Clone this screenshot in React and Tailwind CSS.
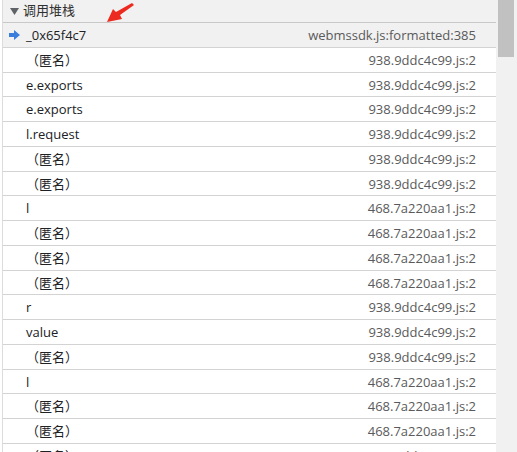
import React from "react";

const frames = [
  { name: "_0x65f4c7", loc: "webmssdk.js:formatted:385", current: true },
  { name: "（匿名）", loc: "938.9ddc4c99.js:2" },
  { name: "e.exports", loc: "938.9ddc4c99.js:2" },
  { name: "e.exports", loc: "938.9ddc4c99.js:2" },
  { name: "l.request", loc: "938.9ddc4c99.js:2" },
  { name: "（匿名）", loc: "938.9ddc4c99.js:2" },
  { name: "（匿名）", loc: "938.9ddc4c99.js:2" },
  { name: "l", loc: "468.7a220aa1.js:2" },
  { name: "（匿名）", loc: "468.7a220aa1.js:2" },
  { name: "（匿名）", loc: "468.7a220aa1.js:2" },
  { name: "（匿名）", loc: "468.7a220aa1.js:2" },
  { name: "r", loc: "938.9ddc4c99.js:2" },
  { name: "value", loc: "938.9ddc4c99.js:2" },
  { name: "（匿名）", loc: "938.9ddc4c99.js:2" },
  { name: "l", loc: "468.7a220aa1.js:2" },
  { name: "（匿名）", loc: "468.7a220aa1.js:2" },
  { name: "（匿名）", loc: "468.7a220aa1.js:2" },
  { name: "（匿名）", loc: "938.9ddc4c99.js:2" },
];

const CurrentArrow = () => (
  <svg width="11" height="10" viewBox="0 0 11 10" className="absolute left-[6px] top-1/2 -translate-y-1/2">
    <path d="M0 3 H5 V0 L11 5 L5 10 V7 H0 Z" fill="#3b7ddd" />
  </svg>
);

const Row = ({ frame }) => (
  <div
    className={`relative flex h-[24.75px] shrink-0 items-center justify-between border-b border-[#d3d3d3] pl-[23px] pr-[20px] pt-[2px] ${
      frame.current ? "bg-[#f1f1f1]" : "bg-white"
    }`}
  >
    {frame.current && <CurrentArrow />}
    <span className="text-[#202124]">{frame.name}</span>
    <span className="text-[#5a5a5a]">{frame.loc}</span>
  </div>
);

export default function App() {
  return (
    <div
      className="relative flex h-[452px] w-[517px] overflow-hidden bg-white text-[13px]"
      style={{ fontFamily: '"Open Sans", "Noto Sans CJK SC", sans-serif' }}
    >
      <div className="ml-[2px] flex w-[494px] flex-col border-l border-[#dcdcdc]">
        {/* header */}
        <div className="flex h-[23px] shrink-0 items-center gap-[4px] border-b border-[#c8c8c8] bg-[#f1f1f1] pl-[7px]">
          <svg width="9" height="7" viewBox="0 0 9 7">
            <path d="M0 0 H9 L4.5 7 Z" fill="#5f6368" />
          </svg>
          <span className="text-[#303030]">调用堆栈</span>
        </div>

        {frames.map((f, i) => (
          <Row key={i} frame={f} />
        ))}
      </div>

      {/* scrollbar */}
      <div className="w-[21px] bg-[#f1f1f1]">
        <div className="ml-[2px] h-[57px] w-[16px] bg-[#c1c1c1]" />
      </div>

      {/* red annotation arrow */}
      <svg
        width="32"
        height="24"
        viewBox="0 0 32 24"
        className="absolute left-[104px] top-[1px]"
      >
        <path d="M28 2 L30 4 L16 14 L18 18 L3 21 L9 8 L12 11 Z" fill="#ec2a1f" />
      </svg>
    </div>
  );
}
